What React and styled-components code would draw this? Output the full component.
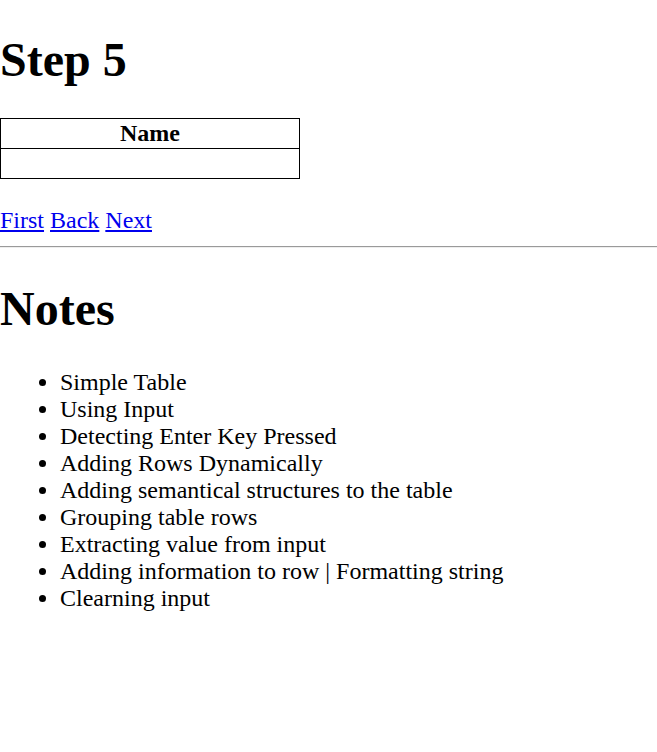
import React from 'react';
import styled, { createGlobalStyle } from 'styled-components';

const GlobalStyle = createGlobalStyle`
  body { margin: 0; background: #fff; color: #000; font-family: "Liberation Serif", "Times New Roman", serif; font-size: 24px; }
`;

const Page = styled.div` display: block; `;
const Title = styled.h1` font-size: 48px; font-weight: bold; margin: ${(p) => p.$top || 32}px 0 31px; line-height: normal; `;
const Table = styled.table` width: 300px; border-collapse: collapse; border: 1px solid #000; `;
const Th = styled.th` border: 1px solid #000; padding: 1px; font-weight: bold; text-align: center; height: 27px; line-height: 27px; `;
const Td = styled.td` border: 1px solid #000; padding: 1px; height: 27px; `;
const Nav = styled.div` margin: 28px 0 0; display: flex; gap: 6px; line-height: 27px; `;
const NavLink = styled.a` color: #0000ee; text-decoration: underline; cursor: pointer; `;
const Rule = styled.hr` margin: 12px 0 0; border: 0; border-top: 1px solid #9a9a9a; border-bottom: 1px solid #eee; height: 0; `;
const Notes = styled.ul` margin: 33px 0 24px; padding-left: 60px; list-style: disc; `;
const Note = styled.li` line-height: 27px; `;

const notes = [
  'Simple Table',
  'Using Input',
  'Detecting Enter Key Pressed',
  'Adding Rows Dynamically',
  'Adding semantical structures to the table',
  'Grouping table rows',
  'Extracting value from input',
  'Adding information to row | Formatting string',
  'Clearning input',
];

function App() {
  return (
    <Page>
      <GlobalStyle />
      <Title>Step 5</Title>
      <Table>
        <thead>
          <tr><Th>Name</Th></tr>
        </thead>
        <tbody>
          <tr><Td></Td></tr>
        </tbody>
      </Table>
      <Nav>
        <NavLink href="#">First</NavLink>
        <NavLink href="#">Back</NavLink>
        <NavLink href="#">Next</NavLink>
      </Nav>
      <Rule />
      <Title $top={33}>Notes</Title>
      <Notes>
        {notes.map((n) => <Note key={n}>{n}</Note>)}
      </Notes>
    </Page>
  );
}

export default App;
